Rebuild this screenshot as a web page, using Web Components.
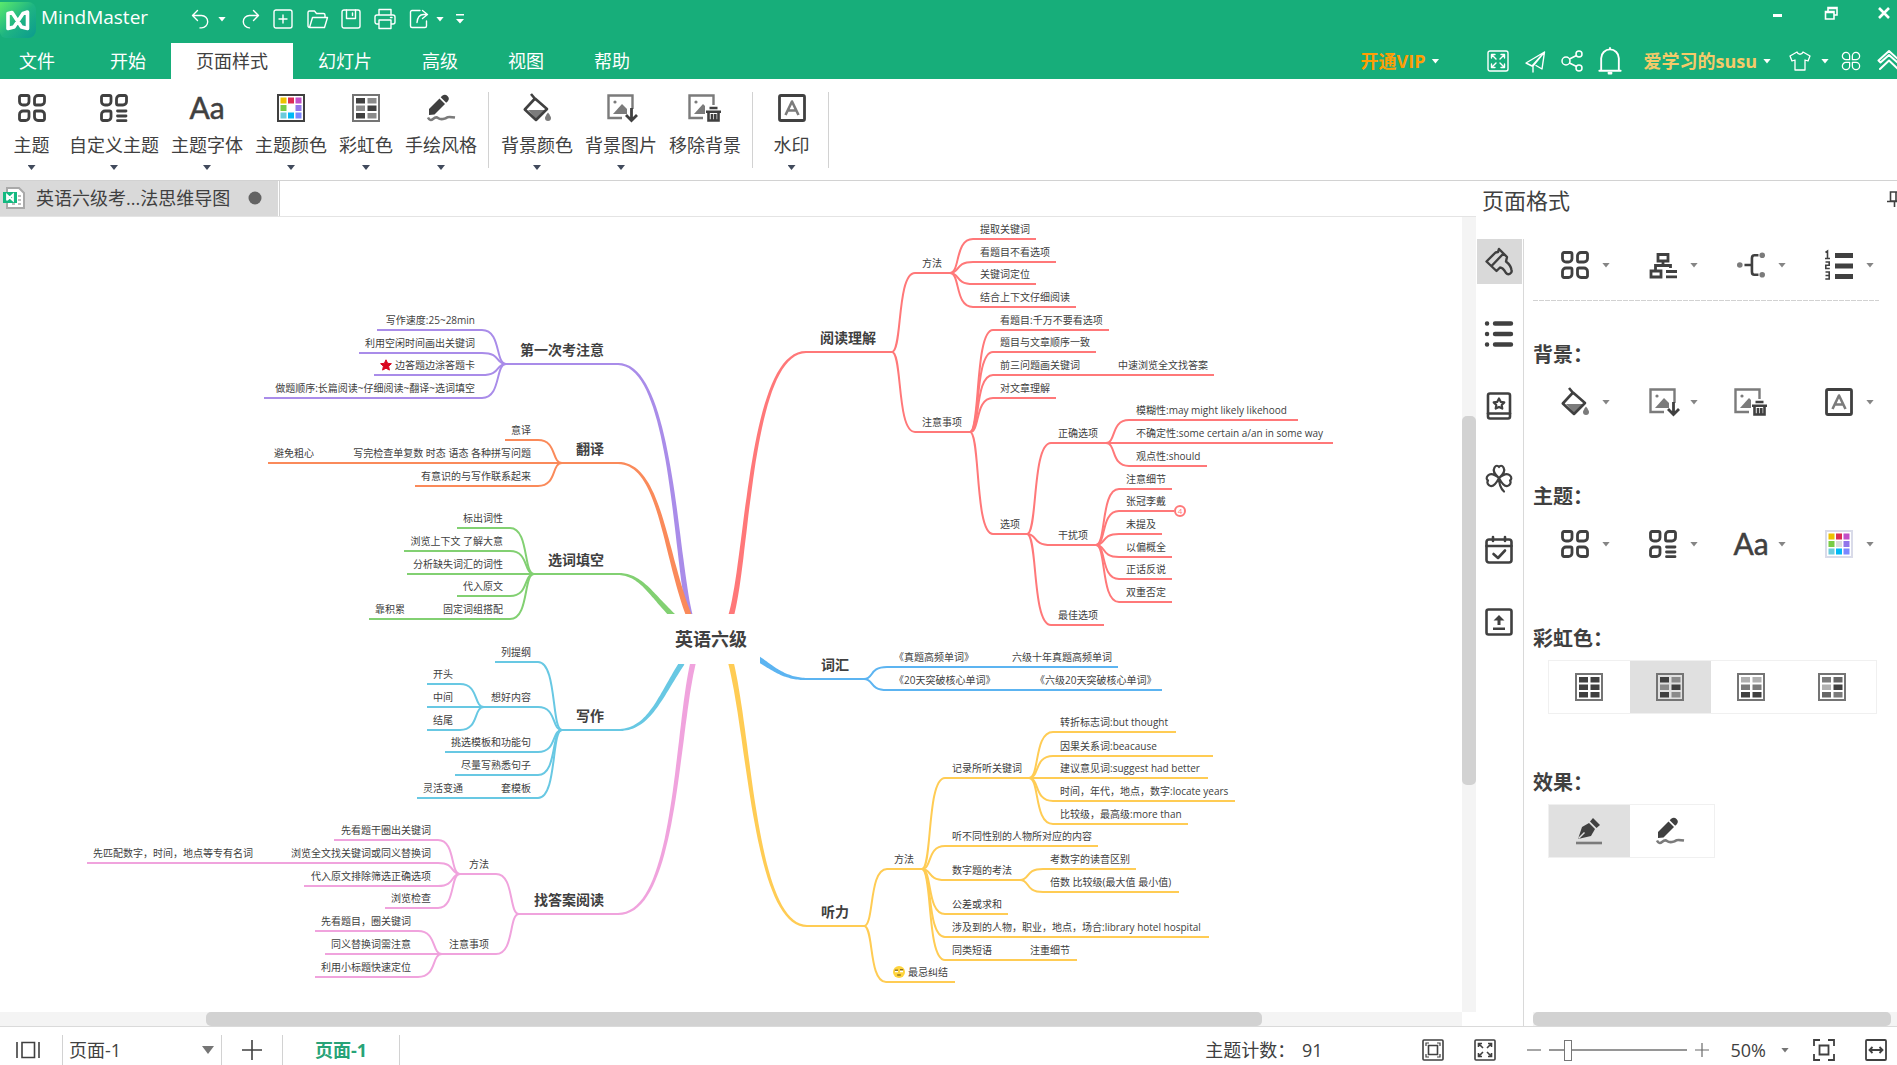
<!DOCTYPE html>
<html lang="zh-CN">
<head>
<meta charset="utf-8">
<title>MindMaster</title>
<style>
html, body { margin: 0; height: 100%; overflow: hidden; background: #fff; }
body { font: 18px/24px "Open Sans", "Noto Sans CJK SC", sans-serif; color: #404040; }
</style>
</head>
<body>
<mm-app></mm-app>
<script>
const RESET = `
*{box-sizing:border-box}
button,select,input{font:inherit;color:inherit;background:none;border:0;padding:0;margin:0;border-radius:0}
button{display:flex;align-items:center;justify-content:center;cursor:pointer}
`;
function define(name, css, html, setup) {
  const tpl = document.createElement('template');
  tpl.innerHTML = `<style>${RESET}${css}</style>${html}`;
  customElements.define(name, class extends HTMLElement {
    connectedCallback() {
      if (this.shadowRoot) return;
      this.attachShadow({ mode: 'open' }).append(tpl.content.cloneNode(true));
      if (setup) setup(this, this.shadowRoot);
    }
  });
}

/* ---------- icons ---------- */
const S = (w, inner) => `<g fill="none" stroke="currentColor" stroke-width="${w}" stroke-linecap="round" stroke-linejoin="round">${inner}</g>`;
const SQ = (w, inner) => `<g fill="none" stroke="currentColor" stroke-width="${w}">${inner}</g>`;
const GRID3 = '<path d="M3 1.5h6.500a1.500 1.500 0 0 1 1.500 1.500V7.500a3.500 3.500 0 0 1-3.500 3.500H5A3.500 3.500 0 0 1 1.500 7.500V3A1.500 1.500 0 0 1 3 1.500zM20 1.500h5a1.500 1.500 0 0 1 1.500 1.500v4.500A3.500 3.500 0 0 1 23 11h-5a1.500 1.500 0 0 1-1.500-1.500V5A3.500 3.500 0 0 1 20 1.500zM5 17h4.500a1.500 1.500 0 0 1 1.500 1.500V23a3.500 3.500 0 0 1-3.500 3.500H3A1.500 1.500 0 0 1 1.500 25v-4.500A3.500 3.500 0 0 1 5 17z"/>';
const PICTURE = '<g fill="none" stroke="#7b7b7b" stroke-width="2.4"><path d="M25.500 15V1.500H1.500V24H15"/></g><path fill="#7b7b7b" d="M6 20l9-10 5 5v5z"/><circle cx="8" cy="8" r="1.600" fill="#7b7b7b"/>';
const cells = (cols, frame, bg) => `<rect x="1" y="1" width="26" height="26" fill="${bg}" stroke="${frame}" stroke-width="2"/>` +
  cols.map((c, i) => `<rect x="${i % 2 ? 15.500 : 4}" y="${[4, 11.500, 19][i >> 1]}" width="9" height="5.500" fill="${c}"/>`).join('');
const palette = (frame, mid) => `<rect x="1" y="1" width="26" height="26" fill="#fff" stroke="${frame}" stroke-width="2"/>` +
  ['#edc100', '#dc2c55', '#c24fc8', '#78cc45', mid, '#9176ea', '#6ccbdc', '#00b9f5', '#7b87ff'].map((c, i) =>
    `<rect x="${3.500 + (i % 3) * 7.500}" y="${3.500 + Math.floor(i / 3) * 7.500}" width="6" height="6" fill="${c}"/>`).join('');
const D = '#404040', G = '#8a8a8a', L = '#b0b0b0', M = '#747474';
const ICONS = {
  logo: [36, `<defs><linearGradient id="a" x1="0" y1="0" x2="1" y2="1"><stop offset="0" stop-color="#5bea6c"/><stop offset=".5" stop-color="#1fb582"/><stop offset="1" stop-color="#0b9a8f"/></linearGradient></defs><path fill="url(#a)" d="M0 0h28a8 8 0 0 1 8 8v20a8 8 0 0 1-8 8H6a6 6 0 0 1-6-6z"/><path fill="none" stroke="#fff" stroke-width="3.600" stroke-linejoin="round" d="M8 26.500V11.500l4-1 9.500 14.500 6 1.500V10l-4.500 1.500-9 13.500z"/>`],
  undo: [20, S(1.4, '<path d="M6.500 1.500L1.500 6.500l5 5M1.500 6.500h9a6.200 6.200 0 0 1 0 12.400H9"/>')],
  redo: [20, S(1.4, '<path d="M13.500 1.500l5 5-5 5M18.500 6.500h-9a6.200 6.200 0 0 0 0 12.400"/>')],
  newdoc: [20, S(1.4, '<rect x="1" y="1" width="18" height="18" rx="2"/><path d="M10 6v8M6 10h8"/>')],
  open: [20, S(1.4, '<path d="M1 17V3.500A1.500 1.500 0 0 1 2.500 2h5l2 2.500h7A1.500 1.500 0 0 1 18 6v2M2.500 18.500L5.500 8.500h15l-3 10H2.500A1.500 1.500 0 0 1 1 17"/>')],
  save: [20, S(1.4, '<rect x="1" y="1" width="18" height="18" rx="2"/><path d="M5.500 1v8.500h9V1M11.500 4v2.500"/>')],
  print: [22, S(1.4, '<path d="M5 7V1.500h12V7M5 16H3a2 2 0 0 1-2-2V9a2 2 0 0 1 2-2h16a2 2 0 0 1 2 2v5a2 2 0 0 1-2 2h-2M5 12h12v8.500H5zM16.500 9.500h1.500"/>')],
  share: [20, S(1.4, '<path d="M11 1.500H3A1.500 1.500 0 0 0 1.500 3v14A1.500 1.500 0 0 0 3 18.500h13a1.500 1.500 0 0 0 1.500-1.500v-5M13.500 1.500l5 4-5 4M18.500 5.500h-4c-4 0-6 3-6.500 8"/>')],
  more: [10, '<path fill="#fff" d="M1 0h8v1.500H1zM1 5h8L5 9.500z"/>'],
  min: [14, '<path fill="currentColor" d="M2 8h9v3H2z"/>'],
  restore: [14, SQ(1.6, '<path d="M1.500 5.500h8.500V13H1.500zM4 5V1.500h9V9h-2.500M4 2.500h9M1.500 6.500H10"/>')],
  close: [14, SQ(2.6, '<path d="M2 2l10 10M12 2L2 12"/>')],
  full: [22, S(1.4, '<rect x="1" y="1" width="20" height="20" rx="2"/><path d="M4.500 8V4.500H8M4.500 4.500L9 9M14 4.500h3.500V8M17.500 4.500L13 9M4.500 14v3.500H8M4.500 17.500L9 13M14 17.500h3.500V14M17.500 17.500L13 13"/>')],
  plane: [20, S(1.4, '<path d="M19.500 1L1 12l6 3zM19.500 1L17 18l-6-3.500M19.500 1L8 15v6"/>')],
  nodes: [22, S(1.5, '<circle cx="5" cy="11" r="4"/><circle cx="18" cy="4" r="3"/><circle cx="18" cy="18" r="3"/><path d="M8.500 9l7-3.500M8.500 13l7 3.500"/>')],
  bell: [28, S(2, '<path d="M2.500 24.500h23M4.500 24V11a9.500 9.500 0 0 1 19 0v13M14 1V0"/><path fill="currentColor" d="M12.500 26.500h3v1h-3z"/>')],
  shirt: [22, S(1.3, '<path d="M8 2L1 6l2 5 3-1v10h10V10l3 1 2-5-7-4c-1 3-5 3-6 0z"/>')],
  clover4: [22, S(1.4, '<path d="M9.500 9.500H5.500A4 4 0 1 1 9.500 5.500zM12.500 9.500h4a4 4 0 1 0-4-4zM9.500 12.500H5.500a4 4 0 1 0 4 4zM12.500 12.500h4a4 4 0 1 1-4 4z"/>')],
  up2: [24, S(2, '<path d="M1.500 11.500L12 2l10.500 9.500M1.500 11.500l2 2L12 6l8.500 7.500M3 20l9-8.500L21 20"/>')],
  theme: [28, S(2.8, GRID3 + '<path d="M18 17h5a3.500 3.500 0 0 1 3.500 3.500V25a1.500 1.500 0 0 1-1.500 1.500h-5a3.500 3.500 0 0 1-3.500-3.500v-4.500A1.500 1.500 0 0 1 18 17z"/>')],
  custom: [28, S(2.8, GRID3 + '<path d="M17.500 17h8.500M17.500 22h8.500M17.500 26.700h8.500"/>')],
  font: [28, '<text x="14" y="25" font-family="Lato" font-size="30" text-anchor="middle" fill="currentColor" stroke="currentColor" stroke-width=".5">Aa</text>'],
  palette: [28, palette(D, '#fff')],
  palette2: [28, palette('#d9dbe9', '#dcdcdc')],
  rainbow: [28, cells([D, G, G, D, D, G], M, '#fff')],
  rb1: [28, cells([D, D, D, D, D, D], M, '#fff')],
  rb2: [28, cells([D, G, G, D, D, G], M, '#e0e0e0')],
  rb3: [28, cells([L, L, '#7b7b7b', '#7b7b7b', D, D], M, '#fff')],
  rb4: [28, cells(['#7b7b7b', '#666', L, D, '#666', '#7b7b7b'], M, '#fff')],
  pencil: [28, '<path fill="#404040" d="M2 21v-6L12.500 4.500l5.500 5.500L7.500 20.500z"/><path fill="#404040" d="M13.700 3.300l1.500-1.500a3.900 3.900 0 0 1 5.500 5.500l-1.500 1.500z"/><path fill="none" stroke="#7b7b7b" stroke-width="2.600" d="M1 23.500q2 4 5 1.500t5-1 5 1 4-1.500 8 0"/>'],
  pen: [28, '<path fill="#404040" d="M3 22l4-12 7-4 6 6-4 7z"/><path fill="#404040" d="M15 4.500l3-3.500 7 7-3.500 3z"/><path stroke="#e0e0e0" stroke-width="1.400" d="M3.500 21.500l6-6"/><path stroke="#7b7b7b" stroke-width="2.600" d="M1 26h26"/>'],
  bucket: [28, '<path fill="#7b7b7b" d="M5 16h17l-9 9z"/>' + S(2.6, '<path stroke="#404040" stroke-linecap="butt" d="M8 0l5 6M12 4.500L1.800 15.500 13 26 24 15z"/>') + '<path fill="#7b7b7b" d="M25 18.500q3 4 3 5.500a3 3 0 0 1-6 0q0-1.500 3-5.500z"/>'],
  picdown: [28, PICTURE + '<path fill="none" stroke="#404040" stroke-width="2.800" d="M24.500 14v12M19 21l5.500 5.500L30 21"/>'],
  pictrash: [28, '<g transform="translate(-3)">' + PICTURE + '<path fill="#fff" d="M17 11h14v17H17z"/><path fill="none" stroke="#404040" stroke-width="2.600" d="M21.500 14h8M18 17.800h15M20.500 18v8.500h10V18M24 20v6M27.300 20v6"/></g>'],
  mark: [28, S(2.8, '<rect x="1.500" y="1.500" width="25" height="25" rx="1.500"/>') + '<path fill="none" stroke="#7b7b7b" stroke-width="2.600" stroke-linejoin="round" d="M7.500 21L14 7.500 20.500 21M9.500 16.500h9"/>'],
  layout: [28, SQ(2.8, '<path d="M9 3.500h10v6.500H9zM2 20h10v6H2zM14 10v4M6.500 19v-4.500h15V17M17 20.500h11M17 25.800h11"/>')],
  branch: [30, S(2.8, '<path stroke-linecap="butt" d="M8 15h8M23 4.500h-4.500Q16 4.500 16 8v14q0 3.500 2.500 3.500H23"/>') + '<g fill="#7b7b7b"><circle cx="3" cy="15" r="3"/><circle cx="27" cy="4.500" r="3"/><circle cx="27" cy="25.500" r="3"/></g>'],
  numlist: [28, SQ(1.6, '<path d="M.5 1.500L2.500 0v7M0 7.500h5M.5 11h3.700v3.200H.8v3.300h4M.5 21h3.700v7H.3M.5 24.500h3.700"/>') + '<path fill="currentColor" d="M10 2h18v5H10zM10 12.500h18v5H10zM10 23h18v5H10z"/>'],
  brush: [28, S(2.4, '<path d="M1.500 13.500l9-9 2.500-.5 1-3 8 8-1 4.500q5 4 5.500 8.500a3.200 3.200 0 0 1-5.500 3q-3-5.500-6-5.500L11.500 23zM7 17.500L18.500 5.500"/>')],
  list: [28, S(4.4, '<path d="M10 3.500h16M10 14h16M10 24.500h16M2 3.500h.1M2 14h.1M2 24.500h.1"/>')],
  book: [28, S(2.6, '<rect x="3" y="1.500" width="22" height="25" rx="2"/><path d="M3 21.500h22"/><path stroke-width="2.200" d="M14 6.500l1.700 3.300 3.600.6-2.600 2.600.6 3.600-3.300-1.700-3.300 1.700.6-3.600-2.600-2.600 3.600-.6z"/>')],
  clover: [28, S(2.2, '<path d="M14 14C8 9 8 6 9.500 3.500S13 1.500 14 3c1-1.500 3-2 4.500.5S20 9 14 14zM14 14c-6-5-9-4.500-11-2.500s-1.500 4 0 5c-1.500 2 0 5 2.500 5.500S11 20 14 14zM14 14c6-5 9-4.500 11-2.500s1.500 4 0 5c1.500 2 0 5-2.500 5.500S17 20 14 14zM14 14q0 9 5 13.500"/>')],
  calendar: [28, S(2.6, '<rect x="1.500" y="3.500" width="25" height="23" rx="2.500"/><path d="M1.500 10h25M8 1v4M20 1v4M8.500 18l4.500 4 7-7.500"/>')],
  upload: [28, S(2.6, '<rect x="1.500" y="1.500" width="25" height="25" rx="2"/>') + '<path fill="currentColor" d="M14 7l5.500 5.500h-4V17h-3v-4.500h-4zM8 19.500h12v2.600H8z"/>'],
  pin: [16, SQ(1.6, '<path d="M3.500 1h8v9h-8zM0 10.500h15M7.500 11v5M9 1v9"/>')],
  pages: [24, SQ(1.6, '<path d="M6 4.500h12.500v15H6zM1 4v16M23 4v16"/>')],
  plus: [20, SQ(1.6, '<path d="M10 0v20M0 10h20"/>')],
  plusS: [14, SQ(1.2, '<path d="M7 0v14M0 7h14"/>')],
  minusS: [14, SQ(1.2, '<path d="M0 7h14"/>')],
  fitpage: [22, SQ(1.6, '<rect x="1" y="1" width="20" height="20" rx="1"/><path d="M6.500 6.500h9v9h-9z"/><path stroke-width="1.200" d="M4 7V4h3M15 4h3v3M18 15v3h-3M7 18H4v-3"/>')],
  fitall: [22, SQ(1.6, '<rect x="1" y="1" width="20" height="20" rx="1"/><path d="M4.500 8V4.500H8M4.500 4.500L9 9M14 4.500h3.500V8M17.500 4.500L13 9M4.500 14v3.500H8M4.500 17.500L9 13M14 17.500h3.500V14M17.500 17.500L13 13"/>')],
  focus: [22, SQ(1.8, '<path d="M1 7V1h6M15 1h6v6M21 15v6h-6M7 21H1v-6M6.500 6.500h9v9h-9z"/>')],
  fitwidth: [22, SQ(1.8, '<rect x="1" y="1" width="20" height="20" rx="1"/><path d="M4.500 11h13M7.500 8l-3 3 3 3M14.500 8l3 3-3 3"/>')],
  docfile: [22, '<path fill="#fff" stroke="#a9a9a9" stroke-width="2" d="M4 1h12l5 5v15H4z"/><path stroke="#a9a9a9" stroke-width="1.600" fill="none" d="M9 17h3m3 0h3M15 9h3M15 13h3"/><path fill="#14b981" d="M0 5h14v11H0z"/><path fill="none" stroke="#fff" stroke-width="1.800" d="M4 13.500V8l6 5.500V7.500L4 13"/>'],
  docdot: [14, '<circle cx="7" cy="7" r="6.500" fill="#636363"/>'],
  star: [12, '<path fill="#d9061f" stroke="#d9061f" stroke-linejoin="round" d="M6 .8l1.600 3.500 3.800.4-2.800 2.500.8 3.900L6 9.200l-3.400 1.900.8-3.900L.6 4.700l3.800-.4z"/>'],
  face: [12, '<circle cx="6" cy="6" r="6" fill="#ffd43c"/><path fill="#fff" d="M2 4.500h3v1.800H2zM7 4.500h3v1.800H7z"/><path stroke="#5d4718" fill="none" d="M1.800 4.200h3.200M7 3.800h3.200M4.200 9h3.600"/>']
};
customElements.define('mm-icon', class extends HTMLElement {
  connectedCallback() {
    if (this.shadowRoot) return;
    const [box, inner] = ICONS[this.getAttribute('name')];
    const size = this.getAttribute('size') || box;
    this.attachShadow({ mode: 'open' }).innerHTML =
      `<style>:host{display:block;flex:none;width:${size}px;height:${size}px}svg{display:block;overflow:visible}</style>
       <svg width="${size}" height="${size}" viewBox="0 0 ${box} ${box}" aria-hidden="true">${inner}</svg>`;
  }
});
define('mm-caret', `:host{display:block;flex:none;width:8px;height:5px;background:currentColor;clip-path:polygon(0 0,100% 0,50% 100%)}`, '');
const ib = (icon, label) => `<button aria-label="${label}"><mm-icon name="${icon}"></mm-icon></button>`;

/* ---------- title bar ---------- */
define('mm-titlebar', `
:host{display:flex;height:43px;color:#fff;align-items:flex-start}
.brand{display:flex;gap:5px;width:184px;padding-top:2px}
.brand span{font-size:19px;line-height:30px}
.tools{display:flex;align-items:center;height:38px}
.tools button{width:34px;height:24px}
.tools button.c{width:8px}
.tools button.r{width:32px;margin-left:8px}
.tools button.m{width:10px;margin-left:11px}
.win{display:flex;gap:27px;margin-left:auto;height:26px}
.win button{width:26px}`,
`<div class="brand"><mm-icon name="logo"></mm-icon><span>MindMaster</span></div>
<div class="tools">${ib('undo', '撤销')}<button class="c" aria-label="撤销列表"><mm-caret></mm-caret></button>
<button class="r" aria-label="重做"><mm-icon name="redo"></mm-icon></button>${ib('newdoc', '新建')}${ib('open', '打开')}${ib('save', '保存')}${ib('print', '打印')}${ib('share', '导出')}<button class="c" aria-label="导出选项"><mm-caret></mm-caret></button><button class="m" aria-label="自定义工具栏"><mm-icon name="more"></mm-icon></button></div>
<div class="win">${ib('min', '最小化')}${ib('restore', '还原')}${ib('close', '关闭')}</div>`);

/* ---------- menu bar ---------- */
define('mm-menubar', `
:host{display:flex;height:36px;color:#fff;overflow:hidden}
nav{display:flex}
nav button{padding:0 25px}
nav button:first-child{padding:0 30px 0 19px}
nav button[aria-selected=true]{background:#fff;color:#404040}
.right{display:flex;align-items:center;gap:16px;margin-left:auto}
.g{gap:6px}
.vip{color:#ff9e05;font-weight:700;margin-right:32px}
.user{color:#f5ca69;font-weight:700;margin:0 2px 0 4px}
.bell{margin-left:-2px}
.skin{gap:10px;margin-right:-4px}
.g mm-caret{color:#fff}
.edge{width:20px;justify-content:flex-start}`,
`<nav role="tablist">${['文件', '开始', '页面样式', '幻灯片', '高级', '视图', '帮助'].map(t => `<button role="tab" aria-selected="${t === '页面样式'}">${t}</button>`).join('')}</nav>
<div class="right"><button class="g vip">开通VIP<mm-caret></mm-caret></button>
${ib('full', '全屏')}${ib('plane', '发送')}${ib('nodes', '分享')}<button class="bell" aria-label="通知"><mm-icon name="bell" size="26"></mm-icon></button>
<button class="g user">爱学习的susu<mm-caret></mm-caret></button>
<button class="g skin" aria-label="皮肤"><mm-icon name="shirt"></mm-icon><mm-caret></mm-caret></button>
<button aria-label="应用"><mm-icon name="clover4" size="20"></mm-icon></button><button class="edge" aria-label="收起"><mm-icon name="up2"></mm-icon></button></div>`);

/* ---------- ribbon ---------- */
define('mm-ribbon-button', `
:host{display:block}
button{flex-direction:column;justify-content:flex-start;padding:15px 6px 0;min-width:63px;height:100%}
.label{margin-top:9px;line-height:28px}
mm-caret{color:#414a5c;margin-top:6px}
:host([plain]) mm-caret{display:none}`,
`<button><span class="label"><slot></slot></span><mm-caret></mm-caret></button>`,
(host, root) => {
  const icon = document.createElement('mm-icon');
  icon.setAttribute('name', host.getAttribute('icon'));
  root.querySelector('button').prepend(icon);
});
define('mm-ribbon', `
:host{display:flex;height:102px;border-bottom:1px solid #d2d2d2;background:#fff}
i{width:1px;height:76px;margin:13px 6px 0 5px;background:#d2d2d2}
i+.w{margin-left:1px}i+.w+i{margin-left:5px}`,
`<mm-ribbon-button icon="theme">主题</mm-ribbon-button><mm-ribbon-button icon="custom">自定义主题</mm-ribbon-button><mm-ribbon-button icon="font">主题字体</mm-ribbon-button><mm-ribbon-button icon="palette">主题颜色</mm-ribbon-button><mm-ribbon-button icon="rainbow">彩虹色</mm-ribbon-button><mm-ribbon-button icon="pencil">手绘风格</mm-ribbon-button><i></i><mm-ribbon-button icon="bucket">背景颜色</mm-ribbon-button><mm-ribbon-button icon="picdown">背景图片</mm-ribbon-button><mm-ribbon-button icon="pictrash" plain>移除背景</mm-ribbon-button><i></i><mm-ribbon-button class="w" icon="mark">水印</mm-ribbon-button><i></i>`);

/* ---------- document tabs ---------- */
define('mm-doctabs', `
:host{display:flex;height:36px;border-bottom:1px solid #e4e4e4}
button{width:278px;background:#d9d9d9;padding:0 16px 1px 3px;justify-content:flex-start;gap:11px}
mm-icon:last-child{margin-left:auto}
i{width:1px;margin-left:1px;background:#d2d2d2}`,
`<button><mm-icon name="docfile"></mm-icon>英语六级考...法思维导图<mm-icon name="docdot"></mm-icon></button><i></i>`);

/* ---------- mind map ----------
   Topic: [text, left, right, baseline, children, icon]. Coordinates are canvas pixels. */
const BRANCHES = [
  { side: 'l', color: '#a98ce9', root: [672, 146, 675, 338, 690, 398], topic: ['第一次考注意', 506, 618, 146, [
    ['写作速度:25~28min', 377, 482, 112], ['利用空闲时间画出关键词', 359, 482, 135],
    ['边答题边涂答题卡', 374, 482, 157, [], 'star'], ['做题顺序:长篇阅读~仔细阅读~翻译~选词填空', 264, 482, 180]]] },
  { side: 'l', color: '#fa8a5a', root: [660, 245, 664, 333, 689, 398], topic: ['翻译', 562, 618, 245, [
    ['意译', 505, 538, 222], ['写完检查单复数 时态 语态 各种拼写问题', 346, 538, 245, [['避免粗心', 268, 321, 245]]],
    ['有意识的与写作联系起来', 415, 538, 268]]] },
  { side: 'l', color: '#82d072', root: [640, 356, 650, 375, 673, 398], topic: ['选词填空', 534, 618, 356, [
    ['标出词性', 457, 510, 310], ['浏览上下文 了解大意', 404, 510, 333], ['分析缺失词汇的词性', 407, 510, 356],
    ['代入原文', 457, 510, 378], ['固定词组搭配', 437, 510, 401, [['靠积累', 369, 412, 401]]]]] },
  { side: 'l', color: '#68c8e3', root: [648, 512, 658, 483, 682, 445], topic: ['写作', 562, 618, 512, [
    ['列提纲', 495, 538, 444], ['想好内容', 484, 538, 489, [['开头', 427, 460, 466], ['中间', 427, 460, 489], ['结尾', 427, 460, 512]]],
    ['挑选模板和功能句', 445, 538, 534], ['尽量写熟悉句子', 455, 538, 557],
    ['套模板', 495, 538, 580, [['灵活变通', 417, 470, 580]]]]] },
  { side: 'l', color: '#f0a3dd', root: [676, 696, 676, 518, 693, 445], topic: ['找答案阅读', 519, 618, 696, [
    ['方法', 460, 496, 656, [['先看题干圈出关键词', 334, 438, 622],
      ['浏览全文找关键词或同义替换词', 284, 438, 645, [['先匹配数字，时间，地点等专有名词', 87, 260, 645]]],
      ['代入原文排除筛选正确选项', 304, 438, 668], ['浏览检查', 385, 438, 690]]],
    ['注意事项', 442, 496, 736, [['先看题目，圈关键词', 315, 418, 713], ['同义替换词需注意', 325, 418, 736], ['利用小标题快速定位', 315, 418, 759]]]]] },
  { side: 'r', color: '#ff7879', root: [750, 134, 748, 338, 731, 398], topic: ['阅读理解', 806, 892, 134, [
    ['方法', 915, 950, 55, [['提取关键词', 973, 1036, 21], ['看题目不看选项', 973, 1056, 44], ['关键词定位', 973, 1036, 66], ['结合上下文仔细阅读', 973, 1076, 89]]],
    ['注意事项', 915, 970, 214, [['看题目:千万不要看选项', 993, 1109, 112], ['题目与文章顺序一致', 993, 1096, 134],
      ['前三问题画关键词', 993, 1086, 157, [['中速浏览全文找答案', 1111, 1214, 157]]], ['对文章理解', 993, 1056, 180],
      ['选项', 993, 1027, 316, [
        ['正确选项', 1051, 1106, 225, [['模糊性:may might likely likehood', 1129, 1298, 202], ['不确定性:some certain a/an in some way', 1129, 1333, 225], ['观点性:should', 1129, 1207, 248]]],
        ['干扰项', 1051, 1096, 327, [['注意细节', 1119, 1172, 271], ['张冠李戴', 1119, 1174, 293], ['未提及', 1119, 1162, 316], ['以偏概全', 1119, 1172, 339], ['正话反说', 1119, 1172, 361], ['双重否定', 1119, 1172, 384]]],
        ['最佳选项', 1051, 1104, 407]]]]]]] },
  { side: 'r', color: '#5cb4f1', root: [785, 461, 774, 451, 757, 440], topic: ['词汇', 807, 864, 461, [
    ['《真题高频单词》', 887, 981, 449, [['六级十年真题高频单词', 1005, 1118, 449]]],
    ['《20天突破核心单词》', 887, 1002, 472, [['《六级20天突破核心单词》', 1028, 1162, 472]]]]] },
  { side: 'r', color: '#ffcc54', root: [755, 708, 750, 523, 731, 445], topic: ['听力', 807, 864, 708, [
    ['方法', 887, 922, 651, [
      ['记录所听关键词', 945, 1029, 560, [['转折标志词:but thought', 1053, 1176, 514], ['因果关系词:beacause', 1053, 1213, 538], ['建议意见词:suggest had better', 1053, 1208, 560], ['时间，年代，地点，数字:locate years', 1053, 1235, 583], ['比较级，最高级:more than', 1053, 1188, 606]]],
      ['听不同性别的人物所对应的内容', 945, 1098, 628],
      ['数字题的考法', 945, 1020, 662, [['考数字的读音区别', 1043, 1136, 651], ['倍数 比较级(最大值 最小值)', 1043, 1179, 674]]],
      ['公差或求和', 945, 1008, 696], ['涉及到的人物，职业，地点，场合:library hotel hospital', 945, 1209, 719],
      ['同类短语', 945, 998, 742, [['注重细节', 1023, 1077, 742]]]]],
    ['最忌纠结', 886, 955, 764, [], 'face']]] }
];
/* A stroke that widens from the branch topic towards the central topic. */
function taper(x0, y0, [x1, y1, x2, y2, x3, y3]) {
  const a = [], b = [], n = 40;
  for (let i = 0; i <= n; i++) {
    const t = i / n, u = 1 - t;
    const x = u*u*u*x0 + 3*u*u*t*x1 + 3*u*t*t*x2 + t*t*t*x3, y = u*u*u*y0 + 3*u*u*t*y1 + 3*u*t*t*y2 + t*t*t*y3;
    const dx = u*u*(x1-x0) + 2*u*t*(x2-x1) + t*t*(x3-x2), dy = u*u*(y1-y0) + 2*u*t*(y2-y1) + t*t*(y3-y2);
    const l = Math.hypot(dx, dy) || 1, w = 1 + 1.8 * t;
    a.push(`${(x - dy/l*w).toFixed(1)} ${(y + dx/l*w).toFixed(1)}`);
    b.unshift(`${(x + dy/l*w).toFixed(1)} ${(y - dx/l*w).toFixed(1)}`);
  }
  return `M${a.join('L')}L${b.join('L')}z`;
}
define('mm-topic', `
:host{position:absolute;display:flex;align-items:center;gap:3px;height:20px;padding:0 7px;font-size:10px;line-height:16px;white-space:nowrap;border-bottom:2px solid var(--line)}
:host([side=l]){justify-content:flex-end}
:host([main]){height:28px;padding:0 14px;font-size:14px;font-weight:700}`, `<slot></slot>`);
define('mm-mindmap', `
:host{display:block;position:relative;overflow:hidden;min-width:0;min-height:0}
.stage{position:absolute;inset:1px 0 0 0}
svg{position:absolute;left:0;top:0;width:100%;height:100%}
.center{position:absolute;left:662px;top:396px;width:98px;height:50px;background:#fff;display:flex;align-items:center;justify-content:center;font-size:18px;font-weight:700}
.fold{position:absolute;left:1174px;top:287px;width:12px;height:12px;border:2px solid #ff7879;border-radius:50%;background:#fff;color:#ff7879;font-size:8px;line-height:8px}`,
`<div class="stage"><svg aria-hidden="true"></svg><div class="topics"></div><div class="center">英语六级</div><button class="fold">4</button></div>`,
(host, root) => {
  const topics = root.querySelector('.topics');
  let paths = '';
  for (const { side, color, root: ctrl, topic } of BRANCHES) {
    const left = side === 'l';
    const walk = ([text, x1, x2, y, kids = [], icon], main) => {
      const el = document.createElement('mm-topic');
      el.setAttribute('side', side);
      if (main) el.setAttribute('main', '');
      el.style.cssText = `left:${x1}px;width:${x2 - x1}px;top:${y - (main ? 27 : 19)}px;--line:${color}`;
      if (icon) { const ic = document.createElement('mm-icon'); ic.setAttribute('name', icon); el.append(ic); }
      el.append(text);
      topics.append(el);
      for (const k of kids) {
        const px = left ? x1 : x2, cx = left ? k[2] : k[1], d = cx - px;
        paths += `<path d="M${px} ${y}C${px + d * .45} ${y} ${px + d * .2} ${k[3]} ${cx} ${k[3]}" fill="none" stroke="${color}" stroke-width="2"/>`;
        walk(k);
      }
    };
    paths += `<path d="${taper(left ? topic[2] : topic[1], topic[3], ctrl)}" fill="${color}"/>`;
    walk(topic, true);
  }
  root.querySelector('svg').innerHTML = paths;
});

define('mm-workspace', `
:host{display:grid;grid-template:minmax(0,1fr) 14px/minmax(0,1fr) 14px;min-height:0}
.v,.h{background:#f4f4f4;display:flex}
.v{flex-direction:column}
.v i{height:46.4%;margin-top:199px}
.h i{width:72.2%;margin-left:14.1%}
i{background:#d2d2d2;border-radius:5px}`,
`<mm-mindmap></mm-mindmap><div class="v"><i></i></div><div class="h"><i></i></div>`);

/* ---------- format panel ---------- */
const cell = (icon, label, caret = true) => `<button aria-label="${label}"><mm-icon name="${icon}" size="28"></mm-icon>${caret ? '<mm-caret></mm-caret>' : ''}</button>`;
const seg = (items) => `<div class="seg">${items.map(([n, l, on]) => `<button aria-label="${l}" aria-pressed="${!!on}"><mm-icon name="${n}"></mm-icon></button>`).join('')}</div>`;
define('mm-panel', `
:host{display:flex;flex-direction:column;overflow:hidden}
header{display:flex;justify-content:space-between;height:58px;padding-left:6px;font-size:22px;line-height:38px}
header button{width:10px;height:36px;justify-content:flex-start}
.body{flex:1;display:flex;min-height:0}
.side{width:48px;border-right:1px solid #d9d9d9;padding-left:1px;display:flex;flex-direction:column;gap:27px}
.side button{width:45px;height:45px;padding-right:2px}
.side button[aria-pressed=true]{background:#d9d9d9}
.main{flex:1;display:flex;flex-direction:column;padding-left:9px;min-width:0}
.row{display:grid;grid-template-columns:repeat(4,88px);height:52px;padding-left:28px}
.row button{justify-content:flex-start;gap:13px}
.row mm-caret{color:#858585}
hr{width:346px;margin:9px 0 40px;border:0;height:1px;background:repeating-linear-gradient(90deg,#d2d2d2 0 5px,transparent 5px 6px)}
h3{margin:0 0 7px;font-size:20px;line-height:28px;font-weight:700}
.row+h3,.seg+h3{margin-top:55px}
.seg{display:flex;align-self:flex-start;height:54px;margin-left:15px;border:1px solid #f0f0f0}
.seg button{width:81px;padding-right:2px}
.seg button:last-child{width:84px;padding-right:5px}
.seg button[aria-pressed=true]{background:#e0e0e0}
.track{margin-top:auto;height:14px;background:#f4f4f4}
.track i{display:block;height:14px;margin-right:6px;background:#d2d2d2;border-radius:5px}`,
`<header>页面格式<button aria-label="固定面板"><mm-icon name="pin"></mm-icon></button></header>
<div class="body"><div class="side">${['brush', 'list', 'book', 'clover', 'calendar', 'upload'].map((n, i) => `<button aria-label="${['页面格式', '大纲', '图标', '剪贴画', '任务', '附件'][i]}" aria-pressed="${!i}"><mm-icon name="${n}"></mm-icon></button>`).join('')}</div>
<div class="main"><div class="row">${cell('theme', '主题')}${cell('layout', '布局')}${cell('branch', '连接线')}${cell('numlist', '编号')}</div><hr>
<h3>背景：</h3><div class="row">${cell('bucket', '背景颜色')}${cell('picdown', '背景图片')}${cell('pictrash', '移除背景', false)}${cell('mark', '水印')}</div>
<h3>主题：</h3><div class="row">${cell('theme', '主题')}${cell('custom', '自定义主题')}${cell('font', '主题字体')}${cell('palette2', '主题颜色')}</div>
<h3>彩虹色：</h3>${seg([['rb1', '单色'], ['rb2', '彩虹色一', 1], ['rb3', '彩虹色二'], ['rb4', '彩虹色三']])}
<h3>效果：</h3>${seg([['pen', '标准', 1], ['pencil', '手绘']])}
<div class="track"><i></i></div></div></div>`);

/* ---------- status bar ---------- */
define('mm-statusbar', `
:host{display:flex;height:39px;padding-top:8px;border-top:1px solid #dadada;background:#fff;align-items:center}
.l,.r{display:flex;align-items:center;height:100%}
.l>*{height:100%;border-right:1px solid #d2d2d2}
.pg{width:63px;padding-right:6px}
label{position:relative;display:flex;align-items:center;width:159px}
select{appearance:none;width:100%;height:100%;padding-left:6px;outline:0}
label mm-caret{position:absolute;right:7px;width:12px;height:8px;color:#757575}
.add{width:61px;padding-right:1px}
.tab{width:117px;color:#27a377;font-weight:700}
.r{margin-left:auto;padding-right:10px}
.count{margin-right:99px}
.count b{font-weight:400;margin-left:2px}
.r button+button.sp{margin-left:30px}
.zoom{display:flex;align-items:center;gap:8px;margin:0 22px 0 31px;color:#6a6a6a}
input{appearance:none;width:138px;height:20px;outline:0;background:linear-gradient(#969696,#969696) center/100% 2px no-repeat}
input::-webkit-slider-thumb{appearance:none;width:8px;height:21px;background:#fff;border:1px solid #777}
.pct{gap:15px;margin-right:24px}
.pct mm-caret{color:#757575}`,
`<div class="l"><button class="pg" aria-label="页面视图"><mm-icon name="pages"></mm-icon></button>
<label><select aria-label="选择页面"><option>页面-1</option></select><mm-caret></mm-caret></label>
<button class="add" aria-label="添加页面"><mm-icon name="plus"></mm-icon></button><button class="tab">页面-1</button></div>
<div class="r"><span class="count">主题计数： <b>91</b></span>
${ib('fitpage', '适应页面')}<button class="sp" aria-label="适应全部"><mm-icon name="fitall"></mm-icon></button>
<div class="zoom">${ib('minusS', '缩小')}<input type="range" min="0" max="100" value="12" aria-label="缩放">${ib('plusS', '放大')}</div>
<button class="pct">50%<mm-caret></mm-caret></button>${ib('focus', '聚焦')}<button class="sp" aria-label="适应宽度"><mm-icon name="fitwidth"></mm-icon></button></div>`);

define('mm-app', `
:host{display:flex;flex-direction:column;height:100vh}
header{background:#17ae7a;flex:none}
mm-ribbon,mm-statusbar{flex:none}
main{flex:1;min-height:0;display:grid;grid-template-columns:minmax(0,1fr) 421px}
section{display:grid;grid-template-rows:36px minmax(0,1fr);min-width:0;min-height:0}`,
`<header><mm-titlebar></mm-titlebar><mm-menubar></mm-menubar></header><mm-ribbon></mm-ribbon>
<main><section><mm-doctabs></mm-doctabs><mm-workspace></mm-workspace></section><mm-panel></mm-panel></main>
<mm-statusbar></mm-statusbar>`);
</script>
</body>
</html>
